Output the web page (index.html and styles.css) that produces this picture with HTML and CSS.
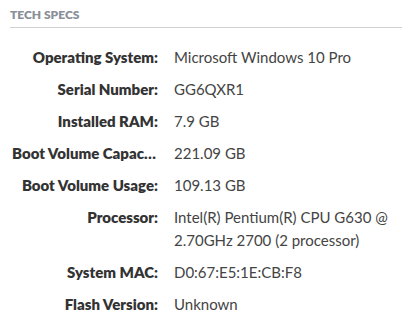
FILE: index.html
```html
<!DOCTYPE html>
<html>
<head>
	<meta charset="utf-8">
	<title>Tech Specs</title>
	<link rel="stylesheet" href="styles.css">
</head>
<body>
<div class="specs">
	<h3 class="specs-title">TECH SPECS</h3>
	<dl class="specs-list">
		<dt>Operating System:</dt>
		<dd>Microsoft Windows 10 Pro</dd>
		<dt>Serial Number:</dt>
		<dd>GG6QXR1</dd>
		<dt>Installed RAM:</dt>
		<dd>7.9 GB</dd>
		<dt>Boot Volume Capacity:</dt>
		<dd>221.09 GB</dd>
		<dt>Boot Volume Usage:</dt>
		<dd>109.13 GB</dd>
		<dt>Processor:</dt>
		<dd>Intel(R) Pentium(R) CPU G630 @ 2.70GHz 2700 (2 processor)</dd>
		<dt>System MAC:</dt>
		<dd>D0:67:E5:1E:CB:F8</dd>
		<dt>Flash Version:</dt>
		<dd>Unknown</dd>
	</dl>
</div>
</body>
</html>
```
FILE: styles.css
```css
body {
	margin: 0;
	padding: 0;
	background: #fff;
	font-family: Lato, "Open Sans", sans-serif;
}

.specs {
	padding: 8px 11px 0 10px;
}

.specs-title {
	margin: 0;
	padding: 0 0 5px;
	font-size: 12px;
	font-weight: 800;
	line-height: 14px;
	color: #8a8f99;
	border-bottom: 1px solid #cfd1d5;
}

.specs-list {
	display: grid;
	grid-template-columns: 148px 1fr;
	column-gap: 16px;
	margin: 13px 0 0;
	font-size: 15px;
	line-height: 23px;
}

.specs-list dt,
.specs-list dd {
	margin: 0;
	padding: 5px 0 4px;
}

.specs-list dt {
	padding-left: 2px;
	font-weight: 800;
	color: #333;
	text-align: right;
	white-space: nowrap;
	overflow: hidden;
	text-overflow: ellipsis;
}

.specs-list dd {
	color: #444;
	padding-right: 10px;
}
```
